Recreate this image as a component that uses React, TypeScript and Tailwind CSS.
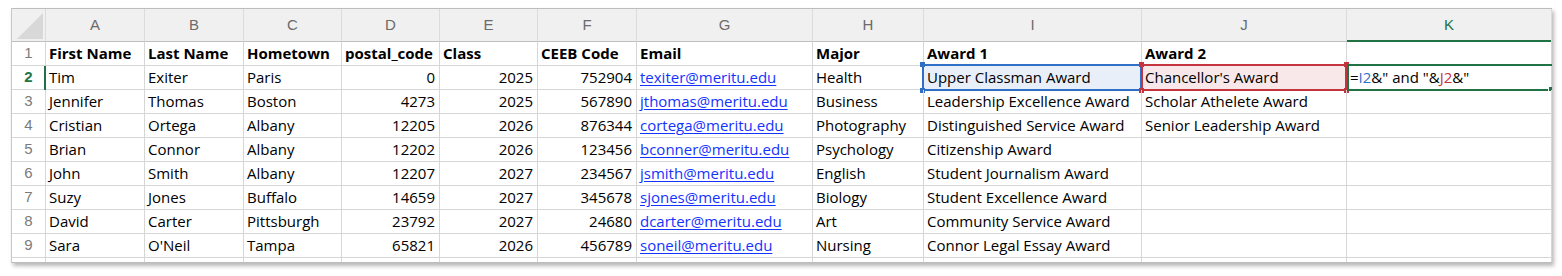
const LETTERS = ["A", "B", "C", "D", "E", "F", "G", "H", "I", "J", "K"];

const HEADINGS = [
  "First Name",
  "Last Name",
  "Hometown",
  "postal_code",
  "Class",
  "CEEB Code",
  "Email",
  "Major",
  "Award 1",
  "Award 2",
  "",
];

const ROWS: string[][] = [
  ["Tim", "Exiter", "Paris", "0", "2025", "752904", "texiter@meritu.edu", "Health", "Upper Classman Award", "Chancellor's Award"],
  ["Jennifer", "Thomas", "Boston", "4273", "2025", "567890", "jthomas@meritu.edu", "Business", "Leadership Excellence Award", "Scholar Athelete Award"],
  ["Cristian", "Ortega", "Albany", "12205", "2026", "876344", "cortega@meritu.edu", "Photography", "Distinguished Service Award", "Senior Leadership Award"],
  ["Brian", "Connor", "Albany", "12202", "2026", "123456", "bconner@meritu.edu", "Psychology", "Citizenship Award", ""],
  ["John", "Smith", "Albany", "12207", "2027", "234567", "jsmith@meritu.edu", "English", "Student Journalism Award", ""],
  ["Suzy", "Jones", "Buffalo", "14659", "2027", "345678", "sjones@meritu.edu", "Biology", "Student Excellence Award", ""],
  ["David", "Carter", "Pittsburgh", "23792", "2027", "24680", "dcarter@meritu.edu", "Art", "Community Service Award", ""],
  ["Sara", "O'Neil", "Tampa", "65821", "2026", "456789", "soneil@meritu.edu", "Nursing", "Connor Legal Essay Award", ""],
];

const NUMERIC = [3, 4, 5];

const cell =
  "relative flex items-center whitespace-nowrap border-r border-b border-[#d6d6d6] px-[3px] text-[15px] text-black font-['Open_Sans',sans-serif]";
const heading =
  "relative flex items-center justify-center border-r border-b border-r-[#dcdcdc] border-b-[#bfbfbf] bg-[#f0f0f0] text-[15px] text-[#6b6b6b] font-['Liberation_Sans',sans-serif]";
const rowNum =
  "relative flex items-center justify-center border-r border-b border-[#d6d6d6] text-[15px] text-[#7a7a7a] font-['Liberation_Sans',sans-serif]";

function Handles({ color }: { color: string }) {
  return (
    <>
      <div className={`absolute left-[-2px] top-[-2px] size-[5px] ${color}`} />
      <div className={`absolute right-[-2px] top-[-2px] size-[5px] ${color}`} />
      <div className={`absolute left-[-2px] bottom-[-2px] size-[5px] ${color}`} />
      <div className={`absolute right-[-2px] bottom-[-2px] size-[5px] ${color}`} />
    </>
  );
}

function DataCell({ row, col, value }: { row: number; col: number; value: string }) {
  // I2: blue reference box
  if (row === 0 && col === 8) {
    return (
      <div className={`${cell} bg-[#e9eff9]`}>
        {value}
        <div className="absolute left-[-2px] top-[-2px] h-[27px] w-[220px]">
          <div className="absolute inset-0 border-2 border-[#2f6fc6]" />
          <Handles color="bg-[#2f6fc6]" />
        </div>
      </div>
    );
  }
  // J2: red reference box
  if (row === 0 && col === 9) {
    return (
      <div className={`${cell} bg-[#f8e8e9]`}>
        {value}
        <div className="absolute left-[-1px] top-[-2px] h-[27px] w-[206px]">
          <div className="absolute inset-0 border-2 border-[#c4343f]" />
          <Handles color="bg-[#c4343f]" />
        </div>
      </div>
    );
  }
  // K2: cell being edited
  if (row === 0 && col === 10) {
    return (
      <div className={`${cell} pl-[3px]`}>
        <span>
          =<span className="text-[#2f6fc6]">I2</span>&amp;" and "&amp;
          <span className="text-[#c4343f]">J2</span>&amp;"
        </span>
        <div className="absolute left-0 right-[-1px] top-[-2px] h-[27px] border-y-2 border-l-2 border-[#217346]" />
        <div className="absolute right-[-1px] bottom-[-2px] size-[4px] border-l border-white bg-[#217346]" />
      </div>
    );
  }
  if (col === 6) {
    return (
      <div className={cell}>
        <span className="text-[#1433ff] underline underline-offset-[2px]">{value}</span>
      </div>
    );
  }
  return (
    <div className={`${cell} ${NUMERIC.includes(col) ? "justify-end pr-[4px]" : ""}`}>
      {value}
    </div>
  );
}

export default function App() {
  return (
    <div className="h-[276px] w-[1562px] bg-white pl-[11px] pt-[8px]">
      <div className="h-[255px] w-[1541px] overflow-hidden border-y border-l border-y-[#bdbdbd] border-l-[#c8c8c8] shadow-[2px_3px_4px_rgba(0,0,0,0.28)]">
        <div className="grid grid-cols-[34px_99px_99px_98px_98px_98px_99px_176px_111px_218px_205px_205px] grid-rows-[33px_repeat(9,24px)_4px]">
          {/* column headings */}
          <div className={heading}>
            <svg width="34" height="32" className="absolute left-0 top-0">
              <polygon points="5,30 31,4 31,30" fill="#d8d8d8" />
            </svg>
          </div>
          {LETTERS.map((l) => (
            <div key={l} className={`${heading} ${l === "K" ? "text-[#217346]" : ""}`}>
              {l}
              {l === "K" && (
                <div className="absolute bottom-[-1px] left-0 right-0 h-[2px] bg-[#217346]" />
              )}
            </div>
          ))}

          {/* row 1 */}
          <div className={rowNum}>1</div>
          {HEADINGS.map((h, i) => (
            <div key={i} className={`${cell} font-bold`}>
              {h}
            </div>
          ))}

          {ROWS.map((r, ri) => (
            <div key={ri} className="contents">
              <div className={`${rowNum} ${ri === 0 ? "font-semibold text-[#217346]" : ""}`}>
                {ri + 2}
                {ri === 0 && (
                  <div className="absolute right-[-1px] top-0 h-[24px] w-[2px] bg-[#217346]" />
                )}
              </div>
              {LETTERS.map((_, ci) => (
                <DataCell key={ci} row={ri} col={ci} value={r[ci] ?? ""} />
              ))}
            </div>
          ))}

          {/* partly visible row 10 */}
          {Array.from({ length: 12 }).map((_, i) => (
            <div key={i} className="border-r border-[#d6d6d6]" />
          ))}
        </div>
      </div>
    </div>
  );
}
